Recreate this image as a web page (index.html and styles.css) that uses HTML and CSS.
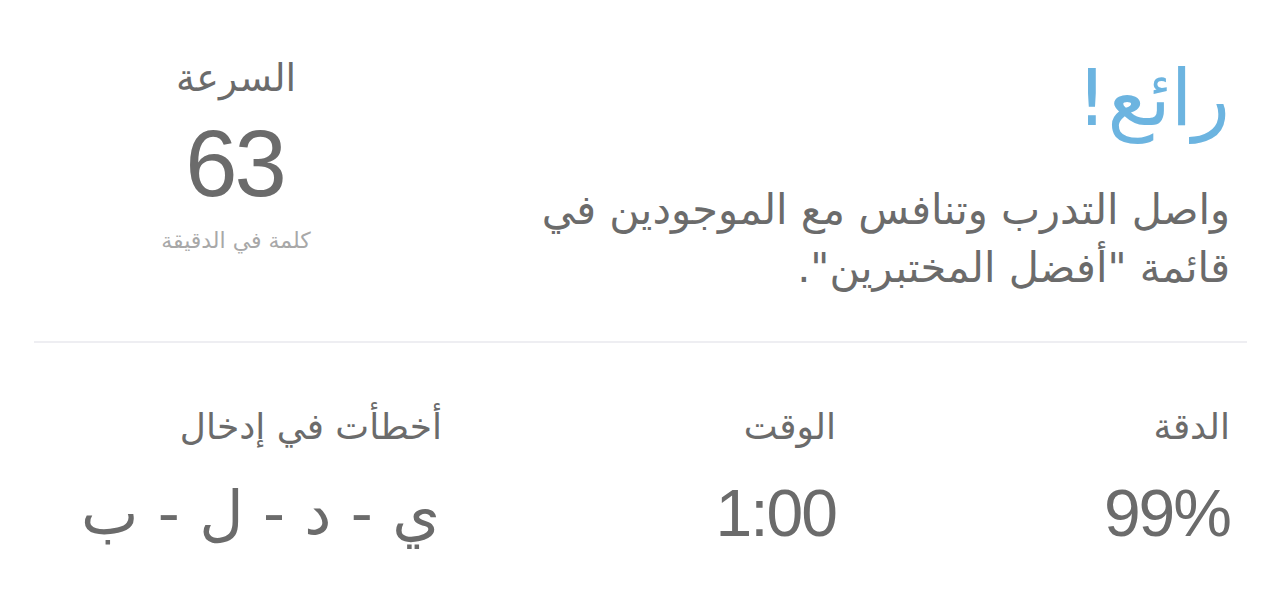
FILE: index.html
```html
<!DOCTYPE html>
<html lang="ar" dir="rtl">
<head>
<meta charset="utf-8">
<link rel="stylesheet" href="styles.css">
</head>
<body>
<main class="result">
  <section class="top">
    <div class="message">
      <h1 class="title">رائع!</h1>
      <p class="text">واصل التدرب وتنافس مع الموجودين في قائمة "أفضل المختبرين".</p>
    </div>
    <div class="speed">
      <div class="speed-label">السرعة</div>
      <div class="speed-value">63</div>
      <div class="speed-unit">كلمة في الدقيقة</div>
    </div>
  </section>
  <hr class="divider">
  <section class="stats">
    <div class="stat">
      <div class="stat-label">الدقة</div>
      <div class="stat-value num">99%</div>
    </div>
    <div class="stat">
      <div class="stat-label">الوقت</div>
      <div class="stat-value num">1:00</div>
    </div>
    <div class="stat">
      <div class="stat-label">أخطأت في إدخال</div>
      <div class="stat-value letters">ي - د - ل - ب</div>
    </div>
  </section>
</main>
</body>
</html>
```
FILE: styles.css
```css
* { box-sizing: border-box; }
html, body { margin: 0; padding: 0; background: #fff; }
body {
  font-family: "DejaVu Sans", "Noto Sans", sans-serif;
  color: #6b6b6b;
  width: 1278px;
  height: 606px;
  overflow: hidden;
}
.result { padding: 0 31px 0 34px; }
.top {
  display: flex;
  justify-content: space-between;
  padding: 0 17px 0 14px;
  height: 341px;
}
.message { padding-top: 48px; width: 740px; }
.title {
  margin: 0;
  font-weight: normal;
  font-size: 78px;
  line-height: 100px;
  color: #6cb4e0;
}
.text {
  margin: 33px 0 0;
  font-size: 41.5px;
  line-height: 58px;
}
.speed {
  width: 376px;
  text-align: center;
  padding-top: 50px;
}
.speed-label { font-size: 38px; line-height: 56px; }
.speed-value {
  font-family: "Liberation Sans", Arial, sans-serif;
  font-size: 94px;
  line-height: 100px;
  margin-top: 8px;
  letter-spacing: -3px;
  padding-right: 3px;
}
.speed-unit { font-size: 22px; line-height: 30px; color: #a8a8a8; margin-top: 12px; }
.divider {
  margin: 0;
  border: 0;
  height: 2px;
  background: #eeeef2;
}
.stats {
  display: grid;
  grid-template-columns: repeat(3, 1fr);
  padding: 58px 17px 0 14px;
}
.stat-label { font-size: 36px; line-height: 52px; }
.stat-value { margin-top: 20px; font-size: 66px; line-height: 80px; }
.num {
  font-family: "Liberation Sans", Arial, sans-serif;
  letter-spacing: -2px;
}
.letters { font-size: 61px; padding-right: 2px; }
```
